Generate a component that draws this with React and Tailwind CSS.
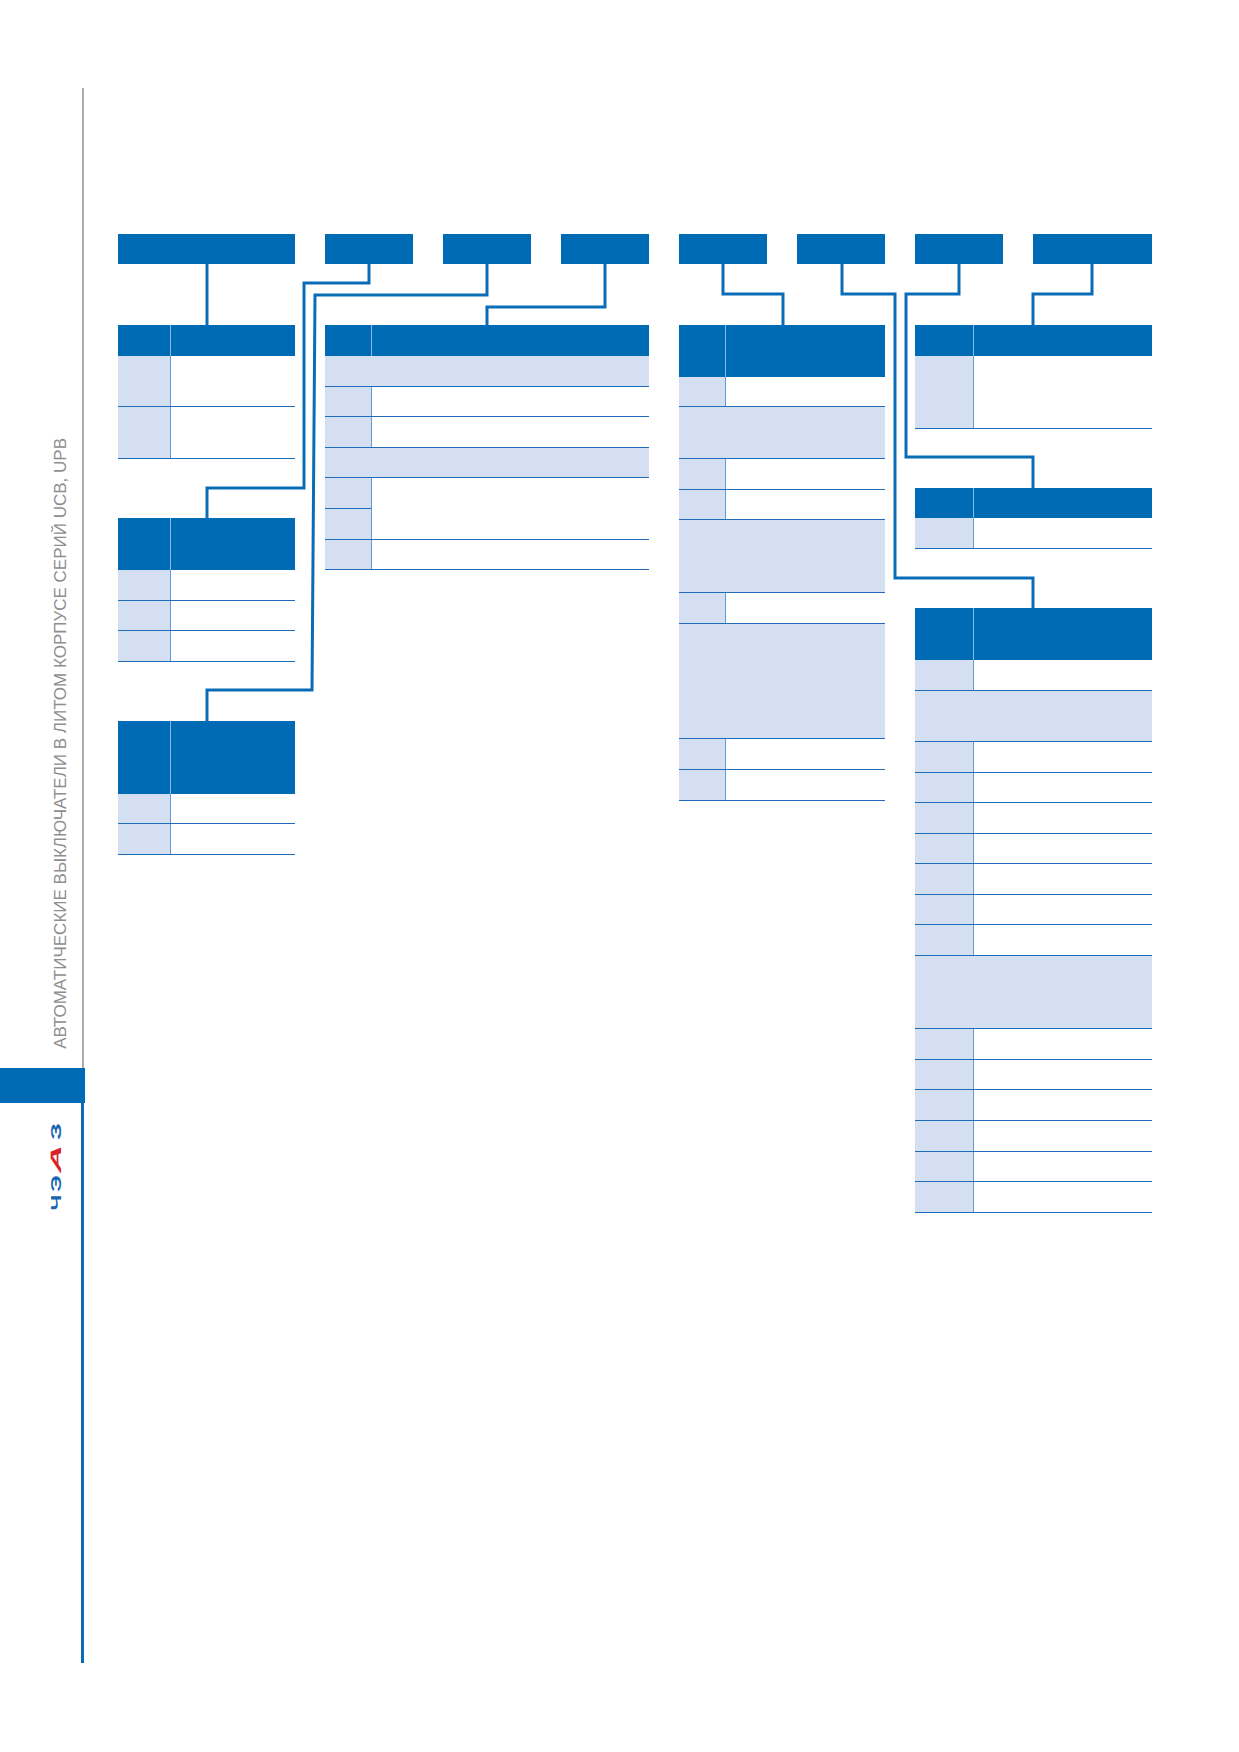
import React from "react";

// row specs: [type, height class] ; h = header, r = two-cell row, s = full-span shaded row, m = two left cells beside one tall right cell
const tables = {
  a: { left: "w-[53px]", rows: [["h", "h-[31px]"], ["r", "h-[51px]"], ["r", "h-[52px]"]] },
  a2: { left: "w-[53px]", rows: [["h", "h-[52px]"], ["r", "h-[30.6px]"], ["r", "h-[30.6px]"], ["r", "h-[30.6px]"]] },
  a3: { left: "w-[53px]", rows: [["h", "h-[73px]"], ["r", "h-[30.6px]"], ["r", "h-[30.6px]"]] },
  b: {
    left: "w-[47px]",
    rows: [
      ["h", "h-[31px]"],
      ["s", "h-[30.6px]"],
      ["r", "h-[30.6px]"],
      ["r", "h-[30.6px]"],
      ["s", "h-[30.6px]"],
      ["m", "h-[61.2px]"],
      ["r", "h-[30.6px]"],
    ],
  },
  c: {
    left: "w-[47px]",
    rows: [
      ["h", "h-[52px]"],
      ["r", "h-[30px]"],
      ["s", "h-[52px]"],
      ["r", "h-[30.5px]"],
      ["r", "h-[30.5px]"],
      ["s", "h-[73px]"],
      ["r", "h-[31px]"],
      ["s", "h-[115px]"],
      ["r", "h-[31px]"],
      ["r", "h-[31px]"],
    ],
  },
  d: { left: "w-[59px]", rows: [["h", "h-[31px]"], ["r", "h-[73px]"]] },
  e: { left: "w-[59px]", rows: [["h", "h-[30px]"], ["r", "h-[31px]"]] },
  f: {
    left: "w-[59px]",
    rows: [
      ["h", "h-[52px]"],
      ["r", "h-[31px]"],
      ["s", "h-[51px]"],
      ["r", "h-[30.57px]"],
      ["r", "h-[30.57px]"],
      ["r", "h-[30.57px]"],
      ["r", "h-[30.57px]"],
      ["r", "h-[30.57px]"],
      ["r", "h-[30.57px]"],
      ["r", "h-[30.57px]"],
      ["s", "h-[73px]"],
      ["r", "h-[30.67px]"],
      ["r", "h-[30.67px]"],
      ["r", "h-[30.67px]"],
      ["r", "h-[30.67px]"],
      ["r", "h-[30.67px]"],
      ["r", "h-[30.67px]"],
    ],
  },
};

const Table = ({ spec }) => (
  <div className="flex flex-col w-full">
    {spec.rows.map(([type, h], i) => {
      if (type === "h")
        return (
          <div key={i} className={`${h} flex bg-[#006bb5]`}>
            <div className={`${spec.left} shrink-0 border-r border-[#8db7e3]`} />
            <div className="flex-1" />
          </div>
        );
      if (type === "s")
        return <div key={i} className={`${h} bg-[#d4dff2] border-b border-[#1f6db8]`} />;
      if (type === "m")
        return (
          <div key={i} className={`${h} flex border-b border-[#1f6db8]`}>
            <div className={`${spec.left} shrink-0 flex flex-col bg-[#d4dff2] border-r border-[#5e9ad4]`}>
              <div className="flex-1 border-b border-[#1f6db8]" />
              <div className="flex-1" />
            </div>
            <div className="flex-1 bg-white" />
          </div>
        );
      return (
        <div key={i} className={`${h} flex border-b border-[#1f6db8]`}>
          <div className={`${spec.left} shrink-0 bg-[#d4dff2] border-r border-[#5e9ad4]`} />
          <div className="flex-1 bg-white" />
        </div>
      );
    })}
  </div>
);

const bars = ["w-[177px]", "w-[88px]", "w-[88px]", "w-[88px]", "w-[88px]", "w-[88px]", "w-[88px]", "w-[119px]"];

const connectors = [
  "M207 264 V325",
  "M369 264 V283 H304 V488 H207 V518",
  "M487 264 V295 H315 L312 690 H207 V721",
  "M605 264 V307 H487 V325",
  "M723 264 V294 H783 V325",
  "M842 264 V294 H895 V578 H1033 V608",
  "M959 264 V294 H906 V457 H1033 V488",
  "M1092 264 V294 H1033 V325",
];

const Sidebar = () => (
  <div className="w-[85px] shrink-0 flex flex-col pt-[88px]">
    <div className="h-[980px] mr-px border-r-2 border-[#ababab] flex flex-col justify-end items-start pl-[52px] pb-[19px]">
      <div className="[writing-mode:vertical-rl] rotate-180 whitespace-nowrap text-[17px] leading-[17px] text-[#8e8e8e] font-['Liberation_Sans',Arial,sans-serif]">
        АВТОМАТИЧЕСКИЕ ВЫКЛЮЧАТЕЛИ В ЛИТОМ КОРПУСЕ СЕРИЙ UCB, UPB
      </div>
    </div>
    <div className="h-[35px] bg-[#006bb5]" />
    <div className="h-[560px] mr-px border-r-[3px] border-[#0a6cb6] pt-[19px] pl-[49px]">
      <div className="flex flex-col items-center w-[13px] font-['Liberation_Sans',Arial,sans-serif] font-bold text-[15px] leading-none">
        <span className="h-[18px] flex items-center justify-center text-[#1866b0]">
          <span className="inline-block [transform:rotate(-90deg)_scaleX(1.8)]">З</span>
        </span>
        <span className="h-[31px] mt-[2px] flex items-center justify-center text-[#d8232a]">
          <span className="inline-block [transform:rotate(-90deg)_scaleX(2.6)_skewX(-12deg)]">А</span>
        </span>
        <span className="h-[17px] mt-[2px] flex items-center justify-center text-[#1866b0]">
          <span className="inline-block [transform:rotate(-90deg)_scaleX(1.55)]">Э</span>
        </span>
        <span className="h-[15px] mt-[3px] flex items-center justify-center text-[#1866b0]">
          <span className="inline-block [transform:rotate(-90deg)_scaleX(1.5)]">Ч</span>
        </span>
      </div>
    </div>
  </div>
);

export default function App() {
  return (
    <div className="relative w-[1239px] min-h-[1752px] bg-white flex">
      <Sidebar />
      <div className="pl-[33px] pt-[234px] flex flex-col gap-[61px]">
        <div className="flex gap-[30px]">
          {bars.map((w, i) => (
            <div key={i} className={`${w} h-[30px] bg-[#006bb5]`} />
          ))}
        </div>
        <div className="flex gap-[30px] items-start">
          <div className="w-[177px] flex flex-col gap-[59px]">
            <Table spec={tables.a} />
            <Table spec={tables.a2} />
            <Table spec={tables.a3} />
          </div>
          <div className="w-[324px]">
            <Table spec={tables.b} />
          </div>
          <div className="w-[206px]">
            <Table spec={tables.c} />
          </div>
          <div className="w-[237px] flex flex-col gap-[59px]">
            <Table spec={tables.d} />
            <Table spec={tables.e} />
            <Table spec={tables.f} />
          </div>
        </div>
      </div>
      <svg className="absolute top-0 left-0 pointer-events-none" width="1239" height="1752" viewBox="0 0 1239 1752">
        {connectors.map((d, i) => (
          <path key={i} d={d} fill="none" stroke="#0a6cb6" strokeWidth="3" strokeLinejoin="miter" />
        ))}
      </svg>
    </div>
  );
}
